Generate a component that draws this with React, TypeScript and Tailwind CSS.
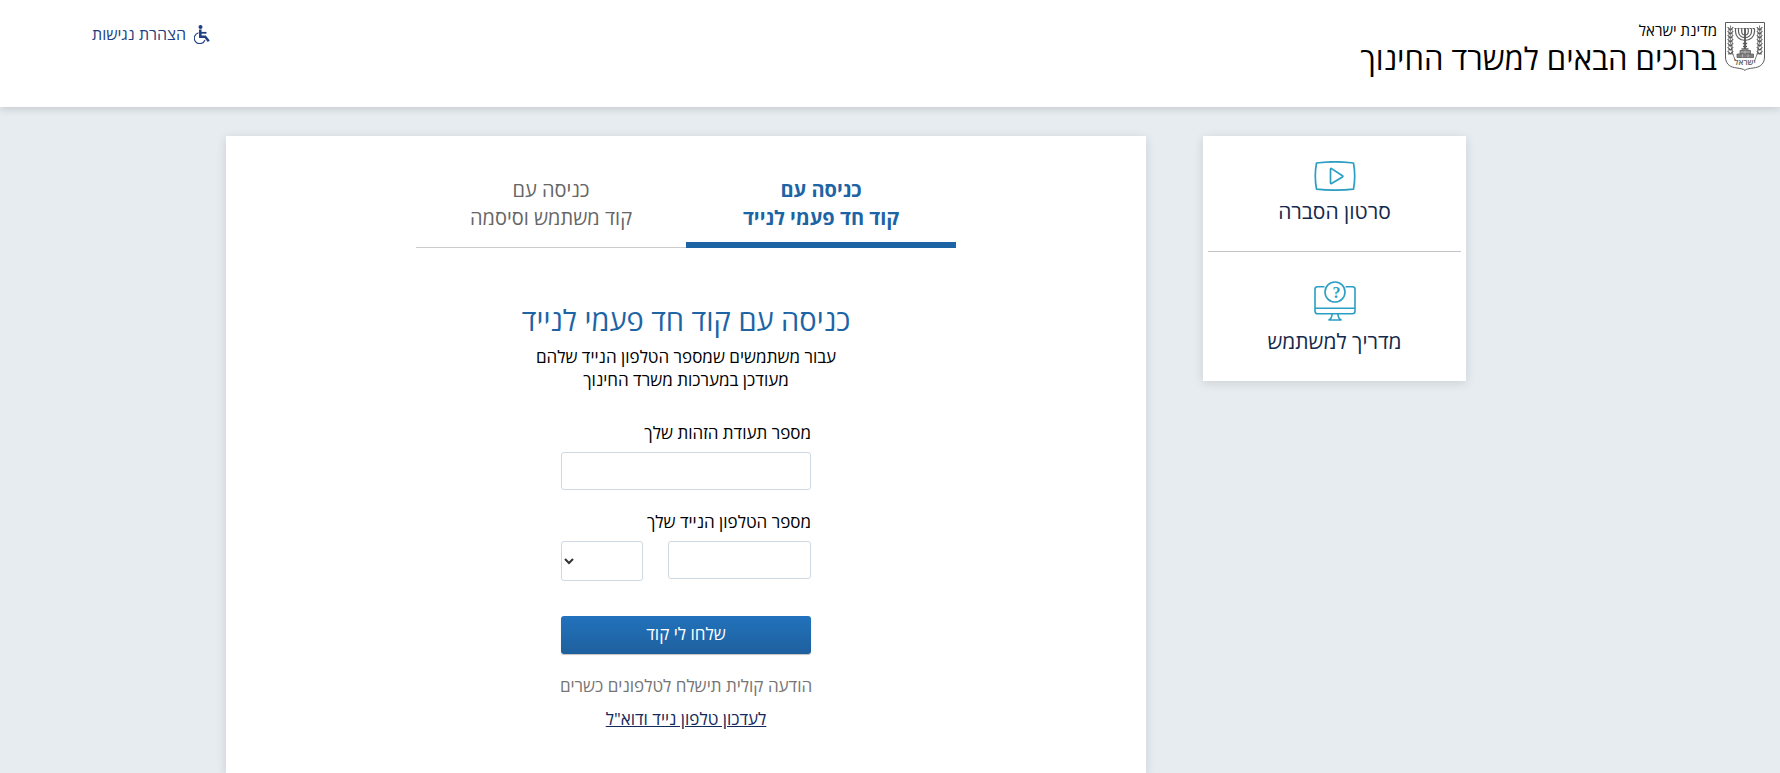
import { useState } from 'react';

function EmblemIcon() {
  const leaves = [8, 12, 16, 20, 24, 28, 32];

  return (
    <svg viewBox="0 0 40 49" className="h-[49px] w-10 shrink-0" fill="none" stroke="#5c5c5c" aria-hidden="true">
      <path d="M.5.5h39v34.500c0 6-3.500 9.600-9 10.600-5 .9-9 1-10.500 2.900-1.500-1.900-5.500-2-10.500-2.900-5.500-1-9-4.600-9-10.600z" />
      {/* menorah branches */}
      <path
        d="M10.500 6.500v3a9.500 9 0 0 0 19 0v-3M13.500 6.500v3a6.500 6.200 0 0 0 13 0v-3M16.700 6.500v3a3.300 3.500 0 0 0 6.600 0v-3"
        strokeWidth="1.200"
      />
      <path d="M20 6v21" strokeWidth="1.900" />
      <path d="M9.500 6.500h21" strokeWidth="1.200" strokeDasharray="2 1" />
      <path d="M17.800 21.500h4.400M18 24.500h4M16.500 27h7" strokeWidth="1.300" />
      {/* base */}
      <path d="M15 28.500h10.500v3.500H15z" fill="#9a9a9a" strokeWidth=".8" />
      <path d="M12 32h16.500v3.500H12z" fill="#808080" strokeWidth=".8" />
      <path d="M17.500 32v3.500M23 32v3.500M20 28.500V32" stroke="#d0d0d0" strokeWidth=".6" />
      {/* olive branches */}
      <path d="M5.500 3.500c-.8 11-.6 23 5 35.500M34.500 3.500c.8 11 .6 23-5 35.500" strokeWidth=".8" />
      {leaves.map((y) => (
        <path
          key={y}
          d={`M5.400 ${y}l-2.800-2.800M5.400 ${y}l2.800-2.800M34.600 ${y}l2.800-2.800M34.600 ${y}l-2.800-2.800M3 ${y}h1.500M6.500 ${y}h1.500M32 ${y}h1.500M35.500 ${y}h1.500`}
          strokeWidth="1.100"
        />
      ))}
      <text x="20" y="43" textAnchor="middle" fontSize="8" fontWeight="600" fill="#5c5c5c" stroke="none">
        ישראל
      </text>
    </svg>
  );
}

function AccessibilityIcon() {
  return (
    <svg viewBox="0 0 16 19" className="h-[19px] w-4" fill="none" stroke="#1f3f80" aria-hidden="true">
      <circle cx="6.500" cy="2" r="2" fill="#1f3f80" stroke="none" />
      <path d="M6.300 4.500v7.300h4.900l3.600 4.400" strokeWidth="2.500" />
      <path d="M6.500 7.800h6" strokeWidth="1.800" />
      <path d="M4.500 7.800A5.500 5.500 0 1 0 11 15" strokeWidth="1.100" />
    </svg>
  );
}

function VideoIcon() {
  return (
    <svg viewBox="0 0 42 30" className="h-[30px] w-[42px]" fill="none" stroke="#2b9fc3" strokeWidth="1.700" strokeLinejoin="round" aria-hidden="true">
      <path d="M2.500 2C14 .5 28 .5 39.500 2c1.600 8.500 1.600 17.500 0 26.200-11.500 1.200-25.500 1.200-37 0C.9 19.500.9 10.500 2.500 2z" />
      <path d="M16.500 8v14c0 .6.500.8 1 .5l11-6.600c.5-.3.5-.9 0-1.200l-11-7.100c-.5-.3-1-.1-1 .4z" />
    </svg>
  );
}

function GuideIcon() {
  return (
    <svg viewBox="0 0 42 40" className="h-10 w-[42px]" fill="none" stroke="#2b9fc3" strokeWidth="1.600" aria-hidden="true">
      <path d="M10.500 5.800H3.500a2.500 2.500 0 0 0-2.500 2.500v22a2.500 2.500 0 0 0 2.500 2.500h35a2.500 2.500 0 0 0 2.500-2.500v-22a2.500 2.500 0 0 0-2.500-2.500h-7M1 27.300h40" />
      <path d="M18 33c0 3-.5 5-3.500 6h13c-3-1-3.500-3-3.500-6" />
      <circle cx="21" cy="11" r="10" />
      <text x="22.500" y="17" textAnchor="middle" fontSize="16" fontWeight="700" fill="#2b9fc3" stroke="none" className="font-['Liberation_Serif',serif]">
        ?
      </text>
    </svg>
  );
}

const tabs = [
  { id: 'otp', lines: ['כניסה עם', 'קוד חד פעמי לנייד'] },
  { id: 'password', lines: ['כניסה עם', 'קוד משתמש וסיסמה'] },
];

export default function App() {
  const [activeTab, setActiveTab] = useState('otp');

  return (
    <div dir="rtl" lang="he" className="flex min-h-screen flex-col bg-[#e7ecf0] font-['Open_Sans','Noto_Sans',sans-serif] text-black">
      <header className="relative flex h-[107px] items-start justify-between bg-white ps-[15px] pe-[92px] pt-[22px] shadow-[0_2px_8px_rgba(0,0,0,0.15)]">
        <div className="flex gap-2">
          <EmblemIcon />
          <div>
            <p className="text-[15px] leading-4">מדינת ישראל</p>
            <h1 className="text-[31px] leading-10">ברוכים הבאים למשרד החינוך</h1>
          </div>
        </div>
        <a href="#accessibility" className="flex items-center gap-2 text-[16px] leading-6 text-[#1f3f80]">
          <AccessibilityIcon />
          הצהרת נגישות
        </a>
      </header>

      <div className="flex flex-1 justify-center ps-[88px] pt-[29px]">
        <div className="flex w-full max-w-[1240px] items-stretch justify-between gap-14">
          <aside className="w-[263px] shrink-0 self-start bg-white px-[5px] text-center text-[21px] leading-7 text-[#14294b] shadow-[0_2px_10px_rgba(0,0,0,0.12)]">
            <a href="#video" className="flex flex-col items-center border-b border-[#c4c4c8] pt-[25px] pb-[26px]">
              <VideoIcon />
              <span className="pt-[6px]">סרטון הסברה</span>
            </a>
            <a href="#guide" className="flex flex-col items-center pt-[29px] pb-[26px]">
              <GuideIcon />
              <span className="pt-[6px]">מדריך למשתמש</span>
            </a>
          </aside>

          <main className="flex max-w-[920px] flex-1 flex-col items-center bg-white pt-10 pb-10 shadow-[0_2px_10px_rgba(0,0,0,0.12)]">
            <div role="tablist" className="flex w-full max-w-[540px] items-stretch">
              {tabs.map((tab) => (
                <button
                  key={tab.id}
                  type="button"
                  role="tab"
                  aria-selected={activeTab === tab.id}
                  onClick={() => setActiveTab(tab.id)}
                  className={
                    activeTab === tab.id
                      ? 'h-[72px] flex-1 border-b-6 border-[#1d64a5] pb-[10px] text-[20px] leading-7 font-bold text-[#1d64a5]'
                      : 'h-[72px] flex-1 border-b border-[#cccccc] pb-[15px] text-[20px] leading-7 text-[#666666]'
                  }
                >
                  {tab.lines.map((line) => (
                    <span key={line} className="block">{line}</span>
                  ))}
                </button>
              ))}
            </div>

            <h2 className="mt-[52px] text-[29px] leading-10 text-[#1d64a5]">כניסה עם קוד חד פעמי לנייד</h2>
            <p className="mt-[5px] text-center text-[17px] leading-[23px]">
              עבור משתמשים שמספר הטלפון הנייד שלהם
              <br />
              מעודכן במערכות משרד החינוך
            </p>

            <form className="mt-[30px] flex w-[250px] flex-col" onSubmit={(e) => e.preventDefault()}>
              <label htmlFor="idNumber" className="text-[17px] leading-6">מספר תעודת הזהות שלך</label>
              <input id="idNumber" type="text" className="mt-[7px] h-[38px] rounded-[3px] border border-[#ced8e2] bg-white px-2" />

              <label htmlFor="phone" className="mt-5 text-[17px] leading-6">מספר הטלפון הנייד שלך</label>
              <div className="mt-[7px] flex items-start justify-between">
                <input id="phone" type="tel" className="h-[38px] w-[143px] rounded-[3px] border border-[#ced8e2] bg-white px-2" />
                <select aria-label="קידומת" className="h-10 w-[82px] rounded-[3px] border border-[#ced8e2] bg-white text-[#333333]">
                  <option value="" />
                </select>
              </div>

              <button type="submit" className="mt-[35px] h-[38px] rounded-[3px] bg-linear-to-b from-[#2272bd] to-[#1e609d] pb-[2px] text-[17px] leading-6 text-white shadow-[0_1px_1px_rgba(0,0,0,0.25)]">
                שלחו לי קוד
              </button>
            </form>

            <p className="mt-5 text-[17px] leading-6 text-[#757575]">הודעה קולית תישלח לטלפונים כשרים</p>
            <a href="#update" className="mt-[9px] text-[17px] leading-6 text-[#14295c] underline">לעדכון טלפון נייד ודוא"ל</a>
          </main>
        </div>
      </div>
    </div>
  );
}
